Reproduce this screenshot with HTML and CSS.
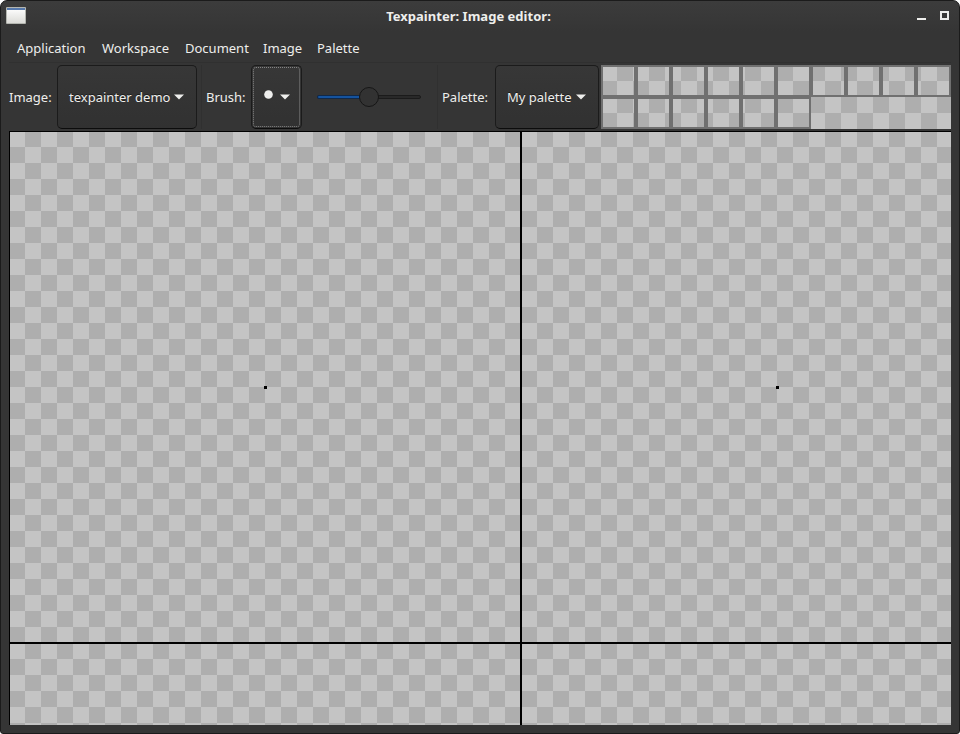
FILE: index.html
```html
<!DOCTYPE html>
<html lang="en">
<head>
<meta charset="utf-8">
<title>Texpainter: Image editor:</title>
<link rel="stylesheet" href="styles.css">
</head>
<body>
<div class="window">
  <header class="titlebar">
    <svg class="app-icon" width="20" height="17" viewBox="0 0 20 17"><defs><linearGradient id="g" x1="0" y1="0" x2="0" y2="1"><stop offset="0" stop-color="#fff"/><stop offset="1" stop-color="#dcdcd8"/></linearGradient></defs><rect width="20" height="17" rx="1" fill="#b4b6b0"/><rect x="1" y="1" width="18" height="15" fill="url(#g)"/><rect x="1" y="1" width="18" height="2" fill="#5779ac"/></svg>
    <h1 class="title">Texpainter: Image editor:</h1>
    <svg class="controls" width="32" height="10" viewBox="0 0 32 10"><path d="M0 7h9v2H0z" fill="#eeeeec"/><path d="M24 1h7v7h-7z" fill="none" stroke="#eeeeec" stroke-width="2"/></svg>
  </header>
  <nav class="menu">
    <span class="m-app">Application</span><span class="m-work">Workspace</span><span class="m-doc">Document</span><span class="m-img">Image</span><span class="m-pal">Palette</span>
  </nav>
  <div class="toolbar">
    <span class="label">Image:</span>
    <button class="select"><span>texpainter demo</span><svg width="10" height="6"><path d="M0 .5h10L5 5.5z" fill="#eeeeec"/></svg></button>
    <i class="sep"></i>
    <span class="label">Brush:</span>
    <button class="select s-brush"><svg class="dot" width="9" height="9"><circle cx="4.5" cy="4.5" r="4.3" fill="#eeeeec"/></svg><svg width="10" height="6"><path d="M0 .5h10L5 5.5z" fill="#eeeeec"/></svg></button>
    <div class="slider"><svg width="106" height="22"><rect x="1.5" y="9.5" width="103" height="3" rx="1.5" fill="#292929" stroke="#1b1b1b"/><rect x="1.5" y="9.5" width="50" height="3" rx="1.5" fill="#15539e" stroke="#10294a"/><circle cx="53" cy="11" r="9.5" fill="#323232" stroke="#161616"/></svg></div>
    <i class="sep sep-palette"></i>
    <span class="label">Palette:</span>
    <button class="select s-palette"><span>My palette</span><svg width="10" height="6"><path d="M0 .5h10L5 5.5z" fill="#eeeeec"/></svg></button>
    <div class="swatches checker">
      <b></b><b></b><b></b><b></b><b></b><b></b><b></b><b></b><b></b><b></b>
      <b></b><b></b><b></b><b></b><b></b><b></b>
    </div>
  </div>
  <main class="canvas checker">
    <div class="tile"><i></i></div><div class="tile"><i></i></div>
    <div class="tile"></div><div class="tile"></div>
  </main>
</div>
</body>
</html>
```
FILE: styles.css
```css
* { box-sizing: border-box; }
html { background: #fff; }
body {
  margin: 0;
  width: 960px;
  height: 734px;
  overflow: hidden;
  font: 13px/20px "Noto Sans", sans-serif;
  color: #eeeeec;
}
.window {
  height: 734px;
  padding: 0 8px;
  border: 1px solid #1b1b1b;
  border-radius: 7px 7px 3px 3px;
  background: linear-gradient(#3c3c3c, #353535 30px);
}
.titlebar {
  height: 31px;
  display: grid;
  grid-template-columns: 48px 1fr 71px;
  margin: 0 -3px;
}
.app-icon { margin-top: 6px; }
.title {
  margin: 5px 0 0;
  text-align: center;
  font: bold 13px/20px "Noto Sans", sans-serif;
  letter-spacing: 0.02px;
}
.controls { justify-self: end; margin: 10px 5px 0 0; }
.menu {
  height: 31px;
  display: flex;
  gap: 16px;
  padding: 6px 8px 0;
  border-bottom: 1px solid #303030;
}
.menu span { white-space: nowrap; }
.m-app { width: 69px; }
.m-work { width: 67px; }
.m-doc { width: 62px; }
.m-img { width: 38px; }
.m-pal { width: 44px; }
.toolbar {
  height: 68px;
  display: grid;
  grid-template-columns: 48px 140px 9px 45px 52px 133px 6px 53px 106px 350px;
  align-items: center;
  padding: 2px 0;
}
.label { white-space: nowrap; }
.sep { height: 64px; margin-left: 4px; border-left: 1px solid #303030; }
.sep-palette { margin-left: 1px; }
.select {
  height: 64px;
  display: flex;
  align-items: center;
  gap: 4px;
  padding: 0 0 0 11px;
  border: 1px solid #1b1b1b;
  border-bottom-color: #0c0c0c;
  border-radius: 5px;
  background: linear-gradient(#373737, #313131);
  font: inherit;
  color: inherit;
  text-shadow: 0 -1px #1c1c1c;
  white-space: nowrap;
}
.s-palette { width: 104px; }
.s-brush {
  width: 51px;
  gap: 7px;
  padding-left: 12px;
  outline: 1px dotted #858585;
  outline-offset: -3px;
}
.dot { margin-top: -5px; }
.slider { height: 22px; padding-left: 13px; }
.slider svg { display: block; }
.checker {
  background: repeating-conic-gradient(#aeaeae 0 25%, #c4c4c4 0 50%) 0 0 / 32px 32px;
}
.swatches {
  height: 64px;
  display: grid;
  grid-template-columns: repeat(10, 35px);
  grid-template-rows: repeat(2, 32px);
}
.swatches b { border: 2px solid #707070; }
.canvas {
  width: 942px;
  height: 594px;
  overflow: hidden;
  display: grid;
  grid-template-columns: 512px 512px;
  grid-template-rows: 512px 512px;
}
.tile { border: 1px solid #000; }
.tile i {
  display: block;
  width: 3px;
  height: 3px;
  margin: 254px 0 0 254px;
  background: #000;
}
```
